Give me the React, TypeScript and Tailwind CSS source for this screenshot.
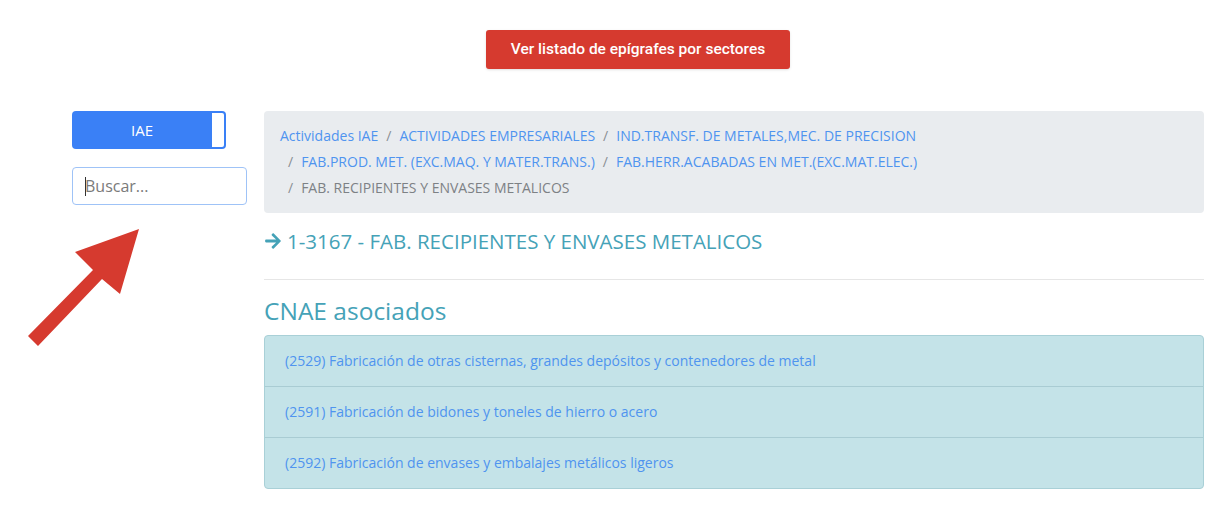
import React from 'react'

const crumbs = [
  'Actividades IAE',
  'ACTIVIDADES EMPRESARIALES',
  'IND.TRANSF. DE METALES,MEC. DE PRECISION',
  'FAB.PROD. MET. (EXC.MAQ. Y MATER.TRANS.)',
  'FAB.HERR.ACABADAS EN MET.(EXC.MAT.ELEC.)',
]

const cnae = [
  '(2529) Fabricación de otras cisternas, grandes depósitos y contenedores de metal',
  '(2591) Fabricación de bidones y toneles de hierro o acero',
  '(2592) Fabricación de envases y embalajes metálicos ligeros',
]

export default function App() {
  return (
    <div className="relative min-h-[508px] bg-white pl-[72px] pr-[18px] pt-[30px] font-['Open_Sans',sans-serif]">
      {/* botón superior */}
      <div className="flex justify-center">
        <button className="h-[39px] rounded-[3px] bg-[#d63a2f] px-[25px] font-['Roboto',sans-serif] text-[15.5px] font-medium text-white shadow-sm">
          Ver listado de epígrafes por sectores
        </button>
      </div>

      <div className="mt-[42px] flex gap-[17px]">
        {/* columna izquierda */}
        <div className="flex w-[175px] shrink-0 flex-col">
          <div className="flex h-[38px] w-[154px]">
            <div className="flex flex-1 items-center justify-center rounded-l-[4px] bg-[#3a80f6] text-[15px] text-white">
              IAE
            </div>
            <div className="w-[14px] rounded-r-[4px] border-2 border-l-0 border-[#3a80f6] bg-white" />
          </div>
          <div className="relative mt-[18px]">
            <input
              placeholder="Buscar..."
              className="h-[38px] w-full rounded-[4px] border border-[#9fc3f7] px-[12px] text-[16px] text-[#495057] outline-none placeholder:text-[#7a7a7a]"
            />
            <div className="absolute left-[13px] top-[10px] h-[19px] w-px bg-[#333]" />
          </div>
        </div>

        {/* contenido principal */}
        <div className="min-w-0 flex-1">
          <div className="flex flex-wrap rounded-[4px] bg-[#e9ecef] px-4 py-3 text-[14px] leading-[26px]">
            {crumbs.map((c, i) => (
              <span key={c} className="flex">
                {i > 0 && <span className="pl-2 pr-2 text-[#8a8f94]">/</span>}
                <span className="text-[#4f94ef]">{c}</span>
              </span>
            ))}
            <span className="flex">
              <span className="pl-2 pr-2 text-[#8a8f94]">/</span>
              <span className="text-[#7d8185]">FAB. RECIPIENTES Y ENVASES METALICOS</span>
            </span>
          </div>

          <h2 className="mt-[13px] flex items-center gap-[5px] text-[20.5px] leading-[30px] text-[#45a2b7]">
            <svg width="18" height="18" viewBox="0 0 448 512" fill="currentColor">
              <path d="M190.5 66.9l22.2-22.2c9.4-9.4 24.6-9.4 33.9 0L441 239c9.4 9.4 9.4 24.6 0 33.9L246.6 467.3c-9.4 9.4-24.6 9.4-33.9 0l-22.2-22.2c-9.5-9.5-9.3-25 .4-34.3L311.4 296H24c-13.3 0-24-10.7-24-24v-32c0-13.3 10.7-24 24-24h287.4L190.9 101.2c-9.8-9.3-10-24.8-.4-34.3z" />
            </svg>
            1-3167 - FAB. RECIPIENTES Y ENVASES METALICOS
          </h2>

          <hr className="mt-[23px] border-t border-[#e6e6e6]" />

          <h3 className="mt-[15px] text-[24.5px] leading-[32px] text-[#45a2b7]">CNAE asociados</h3>

          <div className="mt-[8px] overflow-hidden rounded-[4px] border border-[#a9d0d7] bg-[#c4e3e8]">
            {cnae.map((c, i) => (
              <div
                key={c}
                className={`px-[20px] py-[12px] text-[14px] leading-[26px] text-[#4f94ef] ${i > 0 ? 'border-t border-[#a9ccd3]' : ''}`}
              >
                {c}
              </div>
            ))}
          </div>
        </div>
      </div>

      {/* flecha roja */}
      <svg className="absolute left-0 top-0" width="160" height="360" viewBox="0 0 160 360">
        <polygon
          points="139,229 75,252 93,270 28,336 38,346 102,279 120,294"
          fill="#d63a2f"
        />
      </svg>
    </div>
  )
}
